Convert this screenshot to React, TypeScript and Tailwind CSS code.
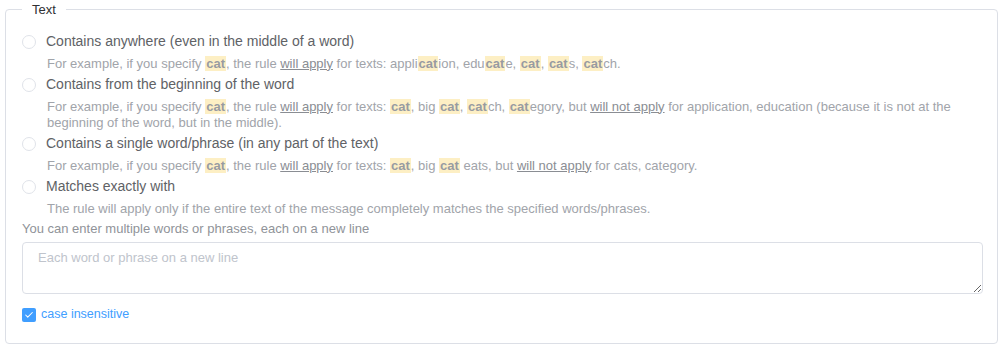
import { Check } from 'lucide-react';

function Cat({ rest = '' }: { rest?: string }) {
  return (
    <>
      <span className="bg-[#fdefc4] px-px font-bold text-[#989ba1]">cat</span>
      {rest}
    </>
  );
}

function U({ children }: { children: React.ReactNode }) {
  return <span className="underline text-[#8a8d93]">{children}</span>;
}

function Option({ label, children }: { label: string; children: React.ReactNode }) {
  return (
    <div className="mb-[3px]">
      <div className="flex items-center h-5">
        <span className="w-[14px] h-[14px] rounded-full border border-[#e0e3e9] bg-white mr-[10px]" />
        <span className="text-[14px] text-[#606266]">{label}</span>
      </div>
      <div className="pl-[25px] mt-1 text-[13px] leading-4 text-[#a1a4aa]">{children}</div>
    </div>
  );
}

export default function App() {
  return (
    <div className="bg-white w-[1005px] h-[350px] pl-[5px] pr-[7px]" style={{ fontFamily: '"Liberation Sans", Arial, sans-serif' }}>
      <fieldset className="border border-[#dcdfe6] rounded-[4px] pl-4 pr-[14px] pb-[20px] pt-[12px]">
        <legend className="px-[10px] text-[13px] text-[#303133]">Text</legend>
        <Option label="Contains anywhere (even in the middle of a word)">
          For example, if you specify <Cat />, the rule <U>will apply</U> for texts: appli<Cat rest="ion, edu" />
          <Cat rest="e, " />
          <Cat rest=", " />
          <Cat rest="s, " />
          <Cat rest="ch." />
        </Option>
        <Option label="Contains from the beginning of the word">
          For example, if you specify <Cat />, the rule <U>will apply</U> for texts: <Cat />, big <Cat />,{' '}
          <Cat rest="ch, " />
          <Cat rest="egory, but " />
          <U>will not apply</U> for application, education (because it is not at the beginning of the word, but in the
          middle).
        </Option>
        <Option label="Contains a single word/phrase (in any part of the text)">
          For example, if you specify <Cat />, the rule <U>will apply</U> for texts: <Cat />, big <Cat /> eats, but{' '}
          <U>will not apply</U> for cats, category.
        </Option>
        <Option label="Matches exactly with">
          The rule will apply only if the entire text of the message completely matches the specified words/phrases.
        </Option>
        <div className="text-[13px] leading-[18px] text-[#909399] mt-[1px]">
          You can enter multiple words or phrases, each on a new line
        </div>
        <textarea
          className="block mt-1 w-full h-[52px] border border-[#dcdfe6] rounded-[4px] px-[15px] py-[5px] text-[13px] placeholder:text-[#c0c4cc] outline-none"
          placeholder="Each word or phrase on a new line"
        />
        <label className="flex items-center mt-[13px] h-4">
          <span className="w-[14px] h-[14px] rounded-[2px] bg-[#409eff] flex items-center justify-center mr-[5px]">
            <Check size={10} strokeWidth={2.5} className="text-white" />
          </span>
          <span className="text-[12.5px] text-[#409eff]">case insensitive</span>
        </label>
      </fieldset>
    </div>
  );
}
